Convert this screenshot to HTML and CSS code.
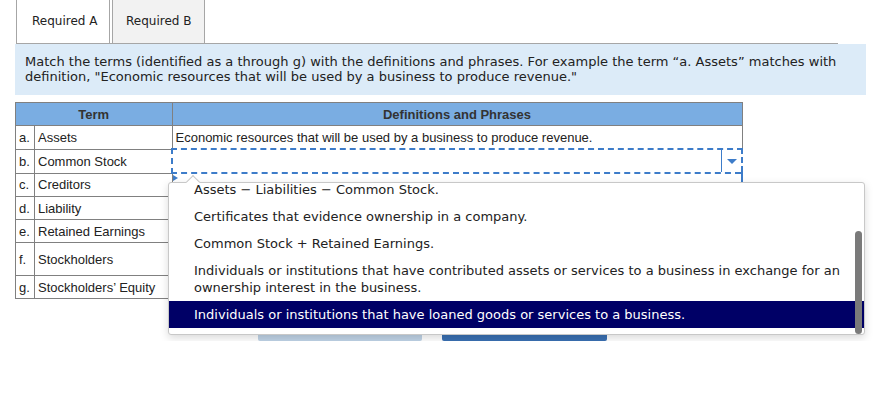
FILE: index.html
```html
<!DOCTYPE html>
<html lang="en">
<head>
    <meta charset="UTF-8">
    <title>Required A</title>
    <link rel="stylesheet" href="styles.css">
</head>
<body>
    <div class="tabs">
        <div class="tab tab-a active">Required A</div>
        <div class="tab tab-b">Required B</div>
    </div>

    <div class="instructions">
        Match the terms (identified as a through g) with the definitions and phrases. For example the term “a. Assets” matches with definition, "Economic resources that will be used by a business to produce revenue."
    </div>

    <table class="match">
        <thead>
            <tr>
                <th colspan="2">Term</th>
                <th>Definitions and Phrases</th>
            </tr>
        </thead>
        <tbody>
            <tr>
                <td class="letter">a.</td>
                <td class="term">Assets</td>
                <td class="def">Economic resources that will be used by a business to produce revenue.</td>
            </tr>
            <tr>
                <td class="letter">b.</td>
                <td class="term">Common Stock</td>
                <td class="def select-cell">
                    <div class="select-arrow"><span class="caret-down"></span></div>
                    <div class="menu">
                        <span class="notch"></span>
                        <ul class="options">
                            <li>Assets − Liabilities − Common Stock.</li>
                            <li>Certificates that evidence ownership in a company.</li>
                            <li>Common Stock + Retained Earnings.</li>
                            <li>Individuals or institutions that have contributed assets or services to a business in exchange for an ownership interest in the business.</li>
                            <li class="selected">Individuals or institutions that have loaned goods or services to a business.</li>
                        </ul>
                        <div class="scrollbar"></div>
                    </div>
                </td>
            </tr>
            <tr>
                <td class="letter">c.</td>
                <td class="term">Creditors</td>
                <td class="def next-cell"><span class="caret-right"></span></td>
            </tr>
            <tr>
                <td class="letter">d.</td>
                <td class="term">Liability</td>
                <td class="def"></td>
            </tr>
            <tr>
                <td class="letter">e.</td>
                <td class="term">Retained Earnings</td>
                <td class="def"></td>
            </tr>
            <tr class="tall">
                <td class="letter">f.</td>
                <td class="term">Stockholders</td>
                <td class="def"></td>
            </tr>
            <tr>
                <td class="letter">g.</td>
                <td class="term">Stockholders’ Equity</td>
                <td class="def"></td>
            </tr>
        </tbody>
    </table>

    <div class="actions">
        <button class="btn btn-prev"></button>
        <button class="btn btn-next"></button>
    </div>
</body>
</html>
```

FILE: styles.css
```css
body {
    margin: 0;
    font-family: "DejaVu Sans", Verdana, sans-serif;
    color: #222;
    background: #fff;
}
.tabs {
    display: flex;
    width: 822px;
    margin-left: 16px;
    border-bottom: 1px solid #a6a6a6;
}
.tab {
    box-sizing: border-box;
    height: 43px;
    line-height: 42px;
    font-size: 12px;
    color: #222;
    border-left: 1px solid #a6a6a6;
    border-right: 1px solid #a6a6a6;
}
.tab-a {
    width: 94px;
    padding-left: 15px;
    background: #fff;
}
.tab-b {
    width: 93px;
    margin-left: 2px;
    padding-left: 13px;
    background: #f2f2f2;
}
.instructions {
    width: 831px;
    margin-left: 15px;
    padding: 10px 10px 11px 10px;
    background: #dcebf8;
    font-size: 13px;
    line-height: 15px;
}
.match {
    margin: 7px 0 0 15px;
    width: 728px;
    border-collapse: collapse;
    font-family: "Liberation Sans", Arial, sans-serif;
    font-size: 13px;
    color: #222;
}
.match th,
.match td {
    border: 1px solid #808080;
    height: 22px;
    padding: 0 3px;
}
.match th {
    background: #7aade2;
    font-weight: bold;
    color: #333;
}
.match .letter {
    width: 12px;
    padding-left: 3px;
}
.match .term {
    width: 130px;
}
.match tr.tall td {
    height: 32px;
}
.select-cell {
    position: relative;
    border: 2px dashed #3d7cc9 !important;
}
.select-arrow {
    position: absolute;
    top: 0;
    right: 0;
    bottom: 0;
    width: 19px;
    border-left: 1px solid #3d7cc9;
}
.caret-down {
    position: absolute;
    top: 9px;
    left: 5px;
    border-left: 5px solid transparent;
    border-right: 5px solid transparent;
    border-top: 5px solid #3d7cc9;
}
.next-cell {
    position: relative;
    border-right: 2px solid #3d7cc9 !important;
}
.caret-right {
    position: absolute;
    top: 1px;
    left: 0;
    border-top: 3px solid transparent;
    border-bottom: 3px solid transparent;
    border-left: 5px solid #3d7cc9;
}
.menu {
    position: absolute;
    z-index: 5;
    left: -5px;
    top: 32px;
    width: 697px;
    height: 153px;
    box-sizing: border-box;
    border: 1px solid #c8c8c8;
    border-radius: 3px;
    background: #fff;
    box-shadow: 0 3px 8px rgba(0, 0, 0, 0.15);
    font-family: "DejaVu Sans", Verdana, sans-serif;
    font-size: 13px;
    color: #222;
}
.notch {
    position: absolute;
    top: -6px;
    left: 19px;
    width: 9px;
    height: 9px;
    background: #fff;
    border-left: 1px solid #c8c8c8;
    border-top: 1px solid #c8c8c8;
    transform: rotate(45deg);
}
.options {
    list-style: none;
    margin: 0;
    padding: 0;
    height: 100%;
    overflow: hidden;
    position: relative;
}
.options li {
    padding: 5px 16px 5px 25px;
    line-height: 17px;
}
.options li:first-child {
    margin-top: -7px;
}
.options li.selected {
    background: #000066;
    color: #fff;
}
.scrollbar {
    position: absolute;
    right: 2px;
    top: 48px;
    bottom: 0;
    width: 7px;
    border-radius: 4px;
    background: #7a7a7a;
}
.actions {
    display: flex;
    gap: 20px;
    margin: 8px 0 0 258px;
}
.btn {
    width: 164px;
    height: 34px;
    border: none;
    border-radius: 2px;
}
.btn-prev {
    background: #bfd3e6;
}
.btn-next {
    width: 165px;
    background: #3a70b2;
}
```
